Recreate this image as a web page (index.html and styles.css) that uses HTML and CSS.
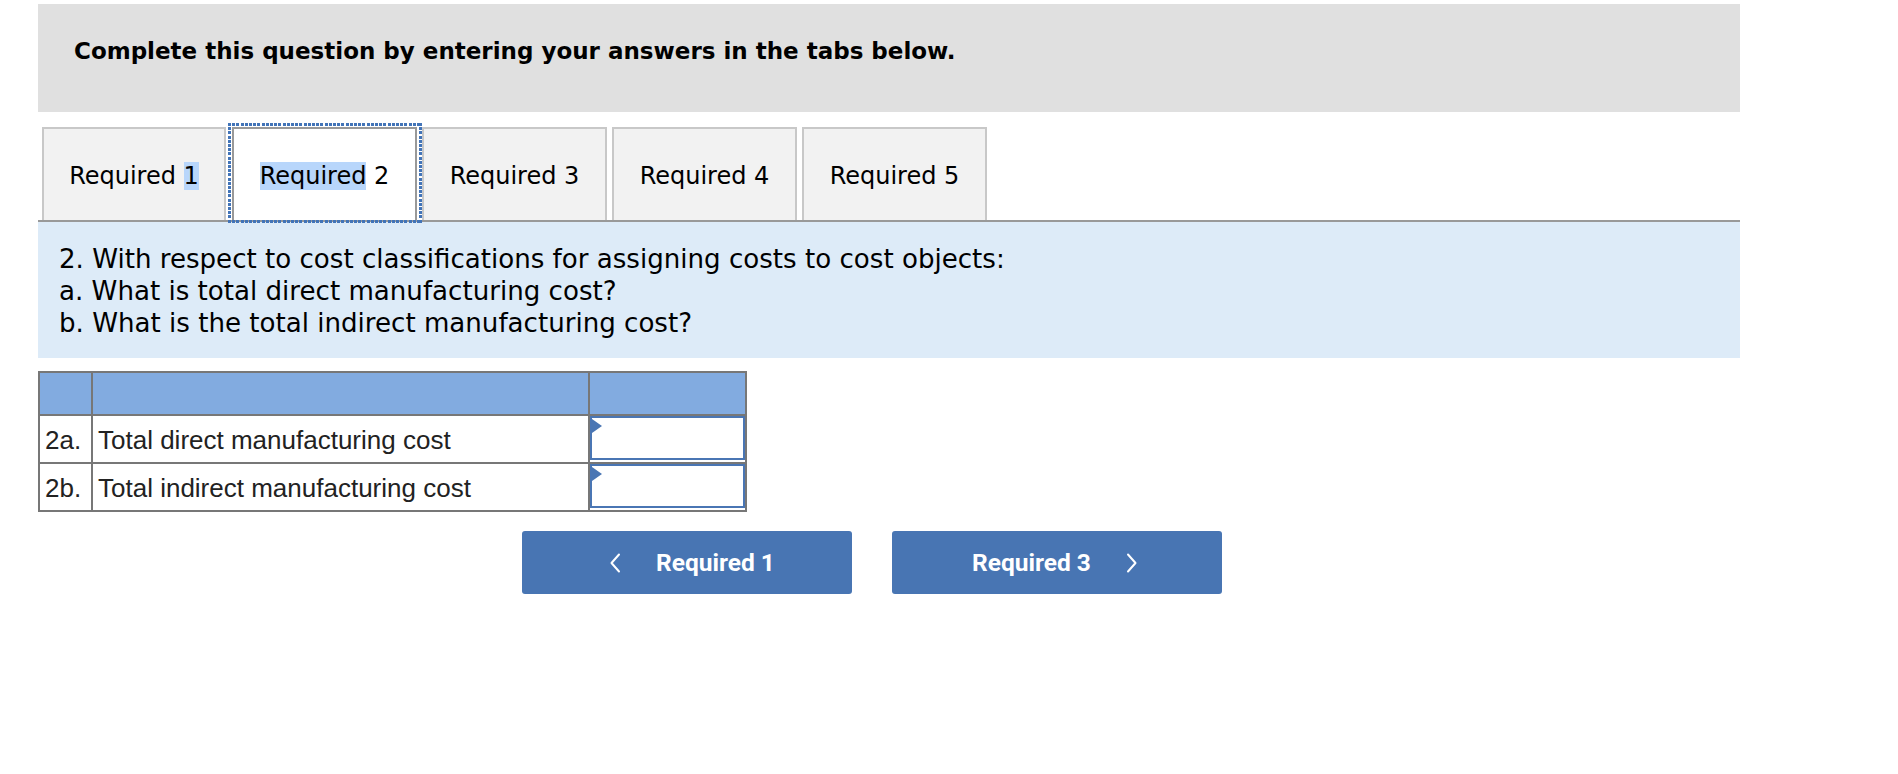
FILE: index.html
```html
<!DOCTYPE html>
<html lang="en">
<head>
<meta charset="utf-8">
<title>Complete this question</title>
<link rel="stylesheet" href="styles.css">
</head>
<body>
<div class="page">
  <div class="banner">
    <h1 class="banner-title">Complete this question by entering your answers in the tabs below.</h1>
  </div>

  <div class="tabbar">
    <div class="tab"><span>Required <span class="sel">1</span></span></div>
    <div class="tab tab-active"><span><span class="sel">Required</span> 2</span></div>
    <div class="tab"><span>Required 3</span></div>
    <div class="tab"><span>Required 4</span></div>
    <div class="tab"><span>Required 5</span></div>
  </div>

  <div class="question">
    <p>2. With respect to cost classifications for assigning costs to cost objects:</p>
    <p>a. What is total direct manufacturing cost?</p>
    <p>b. What is the total indirect manufacturing cost?</p>
  </div>

  <table class="grid">
    <tr class="head">
      <th class="c1"></th>
      <th class="c2"></th>
      <th class="c3"></th>
    </tr>
    <tr>
      <td class="c1">2a.</td>
      <td class="c2">Total direct manufacturing cost</td>
      <td class="c3 cell-input"><div class="answer"><span class="marker"></span></div></td>
    </tr>
    <tr>
      <td class="c1">2b.</td>
      <td class="c2">Total indirect manufacturing cost</td>
      <td class="c3 cell-input"><div class="answer"><span class="marker"></span></div></td>
    </tr>
  </table>

  <div class="nav">
    <button class="navbtn navbtn-prev">
      <svg class="chev" width="12" height="20" viewBox="0 0 12 20"><path d="M10 1.5 L2.5 10 L10 18.5" fill="none" stroke="#fff" stroke-width="2" stroke-linecap="round" stroke-linejoin="round"/></svg>
      <span>Required 1</span>
    </button>
    <button class="navbtn navbtn-next">
      <span>Required 3</span>
      <svg class="chev" width="12" height="20" viewBox="0 0 12 20"><path d="M2 1.5 L9.5 10 L2 18.5" fill="none" stroke="#fff" stroke-width="2" stroke-linecap="round" stroke-linejoin="round"/></svg>
    </button>
  </div>
</div>
</body>
</html>
```

FILE: styles.css
```css
html, body {
  margin: 0;
  padding: 0;
  background: #ffffff;
}

.page {
  width: 1702px;
  padding: 4px 0 0 38px;
  font-family: "DejaVu Sans", Verdana, sans-serif;
  color: #000;
}

.banner {
  background: #e0e0e0;
  height: 108px;
  box-sizing: border-box;
  padding: 34px 36px 0 36px;
}

.banner-title {
  margin: 0;
  font-size: 23px;
  font-weight: bold;
  line-height: 27px;
  color: #000;
}

.tabbar {
  margin-top: 15px;
  display: flex;
  gap: 5px;
  padding-left: 4px;
  border-bottom: 2px solid #999999;
}

.tab {
  width: 185px;
  height: 93px;
  box-sizing: border-box;
  background: #f2f2f2;
  border: 2px solid #c8c8c8;
  border-bottom: none;
  display: flex;
  align-items: center;
  justify-content: center;
  padding-top: 3px;
  font-size: 24px;
  color: #000;
}

.tab:first-child {
  width: 184px;
}

.tab-active {
  background: #ffffff;
  border-color: #999999;
  margin-left: 1px;
  position: relative;
  z-index: 1;
}

.tab-active::after {
  content: "";
  position: absolute;
  left: -6px;
  right: -7px;
  top: -6px;
  bottom: -3px;
  pointer-events: none;
  background:
    repeating-linear-gradient(90deg, #4274b8 0 3px, transparent 3px 4.2px) top / 100% 3px no-repeat,
    repeating-linear-gradient(90deg, #4274b8 0 3px, transparent 3px 4.2px) bottom / 100% 3px no-repeat,
    repeating-linear-gradient(180deg, #4274b8 0 3px, transparent 3px 4.2px) left / 3px 100% no-repeat,
    repeating-linear-gradient(180deg, #4274b8 0 3px, transparent 3px 4.2px) right / 3px 100% no-repeat;
}

.sel {
  background: #b8d6fb;
}

.question {
  background: #ddebf8;
  padding: 21px 21px 19px 21px;
  font-size: 26.1px;
  line-height: 32px;
}

.question p {
  margin: 0;
}

.grid {
  margin-top: 13px;
  border-collapse: collapse;
  border: 2px solid #777777;
  font-family: "Liberation Sans", Arial, sans-serif;
  font-size: 26px;
  color: #222;
}

.grid th, .grid td {
  border: 2px solid #777777;
  padding: 0 0 0 5px;
  text-align: left;
  font-weight: normal;
}

.grid .head th {
  background: #82abe0;
  height: 41px;
}

.grid td {
  height: 44px;
  padding-top: 2px;
}

.c1 { width: 46px; }
.c2 { width: 490px; }
.c3 { width: 150px; }

.grid td.cell-input {
  padding: 0;
  vertical-align: top;
}

.answer {
  position: relative;
  height: 44px;
  box-sizing: border-box;
  border: 2px solid #4a76b4;
  background: #fff;
}

.marker {
  position: absolute;
  left: 0;
  top: 1px;
  width: 0;
  height: 0;
  border-top: 7px solid transparent;
  border-bottom: 7px solid transparent;
  border-left: 10px solid #4a76b4;
}

.nav {
  margin-top: 19px;
  padding-left: 484px;
  display: flex;
  gap: 40px;
}

.navbtn {
  width: 330px;
  height: 63px;
  background: #4875b3;
  border: none;
  border-radius: 3px;
  color: #fff;
  font-family: Roboto, "Liberation Sans", sans-serif;
  font-weight: 700;
  font-size: 24.5px;
  display: flex;
  align-items: center;
  justify-content: center;
  gap: 35px;
  padding: 0;
}

.navbtn-prev {
  padding-left: 10px;
}

.navbtn-next {
  padding-right: 4px;
}

.chev {
  display: block;
}
```
